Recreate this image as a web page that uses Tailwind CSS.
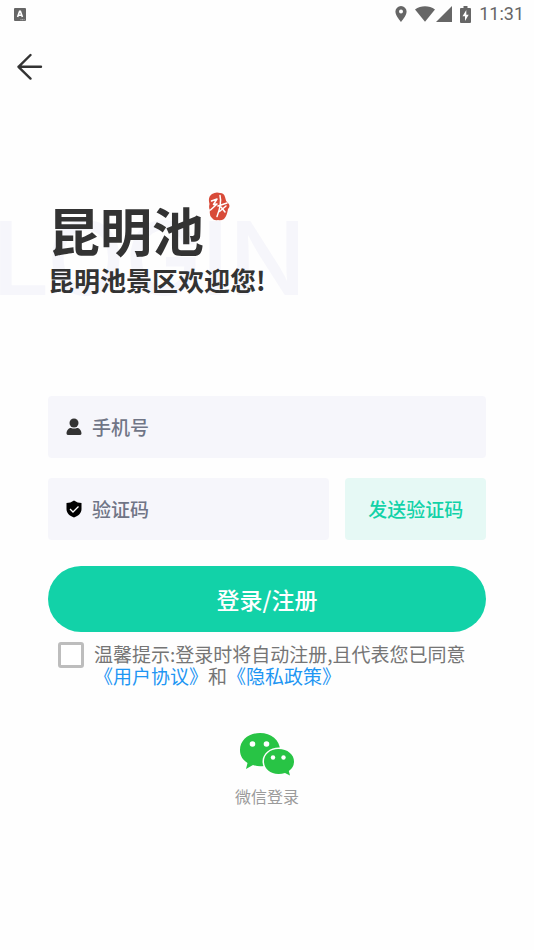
<!DOCTYPE html>
<html lang="zh-CN">
<head>
<meta charset="utf-8">
<meta name="viewport" content="width=device-width, initial-scale=1">
<title>登录</title>
<script src="https://cdn.jsdelivr.net/npm/@tailwindcss/browser@4"></script>
</head>
<body class="min-h-screen overflow-x-hidden bg-[#fefefe] font-['Noto_Sans_CJK_SC',sans-serif] text-[#333]">
<header>
  <div class="flex h-7 items-center justify-between pl-3.5 pr-2.5 text-[#666]">
    <svg class="h-[13px] w-3" viewBox="0 0 12 13" role="img" aria-label="输入法"><rect width="12" height="13" rx="1" fill="#666"/><path d="M3.6 9 5.600 3.200h.8L8.400 9M4.400 7.200h3.200" fill="none" stroke="#fff" stroke-width="1.600"/><path d="M6.500 11.700h4" stroke="#ddd" stroke-width=".8" stroke-dasharray="1 .6"/></svg>
    <div class="flex items-center">
      <svg class="mr-2 h-4 w-3" viewBox="0 0 12 16" fill="#666" aria-hidden="true"><path fill-rule="evenodd" d="M6 0a5.600 5.600 0 0 0-5.600 5.600C.4 9.800 6 16 6 16s5.600-6.200 5.600-10.400A5.600 5.600 0 0 0 6 0Zm0 3.600a2 2 0 1 1 0 4 2 2 0 0 1 0-4Z"/></svg>
      <svg class="mr-px h-4 w-5" viewBox="0 0 20 16" fill="#666" aria-hidden="true"><path d="M0 3.500C6-.8 14-.8 20 3.500L10 15.700Z"/></svg>
      <svg class="mr-2 h-4 w-4" viewBox="0 0 16 16" fill="#666" aria-hidden="true"><path d="M16 0v16H0Z"/></svg>
      <svg class="mr-2 h-[17px] w-[11px]" viewBox="0 0 11 17" aria-hidden="true"><path d="M3.500 0h4v2H10q1 0 1 1v13q0 1-1 1H1q-1 0-1-1V3q0-1 1-1h2.500Z" fill="#666"/><path d="M6.300 4 2.500 10.300h2.500V15l3.700-6.300H6.300Z" fill="#fff"/></svg>
      <time class="font-[Roboto,sans-serif] text-lg leading-7">11:31</time>
    </div>
  </div>
  <button type="button" aria-label="返回" class="ml-4 mt-6 block">
    <svg class="h-7 w-7" viewBox="0 0 28 28" fill="none" stroke="#333" stroke-width="2.400" stroke-linecap="round" stroke-linejoin="round" aria-hidden="true"><path d="M14.500 3 2.500 14.800l12 11.800M2.500 14.800H25"/></svg>
  </button>
</header>
<main class="px-12">
  <section class="relative mt-[110px] pb-[100px]">
    <div aria-hidden="true" class="absolute -left-14 top-2 font-[Inter,sans-serif] text-[102px] font-medium leading-[120px] text-[#f6f6fb]">LOGIN</div>
    <div class="relative flex h-[74px] items-start">
      <span class="mt-2 text-[52px] font-bold leading-[64px]">昆明池</span>
      <svg class="ml-1 mt-0.5 h-[29px] w-[22px]" viewBox="0 0 22 29" aria-hidden="true"><path d="M4 2Q8-.5 12 1q4 0 5 4 .5 4 3 6 3 3 0 6-1 7-4 10-3 2-6 1-4 1-6-2-3-2-2-8Q.5 16 1.500 12-.5 5 4 2Z" fill="#d84b39"/><g fill="none" stroke="#fff" stroke-width="1.500" stroke-linecap="round" stroke-linejoin="round"><path d="M3.500 9 9 7 5.500 12.500 9 12 2.500 18M12 3.500q2 8-3 21M10 14l9-3M13 15l4 5M11.500 19.500 18 14"/></g></svg>
    </div>
    <h1 class="relative text-[26px] font-bold leading-8">昆明池景区欢迎您!</h1>
  </section>
  <form>
    <label class="flex h-[62px] items-center rounded bg-[#f6f6fb] pl-[18px]">
      <svg class="h-[18px] w-4 shrink-0" viewBox="0 0 16 18" fill="#333" aria-hidden="true"><circle cx="8" cy="5" r="4.500"/><path d="M.5 15.500C.5 12 3 10 5 10q3 1.200 6 0c2 0 4.500 2 4.500 5.500q0 1.500-2 1.500h-11q-2 0-2-1.500Z"/></svg>
      <input type="tel" placeholder="手机号" aria-label="手机号" class="ml-2.5 w-full min-w-0 bg-transparent text-[19px] font-medium outline-none placeholder:text-[#707586]">
    </label>
    <div class="mt-5 grid grid-cols-[2fr_1fr] gap-4">
      <label class="flex h-[62px] min-w-0 items-center rounded bg-[#f6f6fb] pl-[18px]">
        <svg class="h-[18px] w-4 shrink-0" viewBox="0 0 16 18" aria-hidden="true"><path d="M8 .5q3.500 2.500 7.500 2.500v6c0 4-3 7-7.500 8.500C3.500 16 .5 13 .5 9V3Q4.500 3 8 .5Z" fill="#000"/><path d="m4 9 3 3 5.500-5.500" fill="none" stroke="#fff" stroke-width="1.300"/></svg>
        <input type="text" inputmode="numeric" placeholder="验证码" aria-label="验证码" class="ml-2.5 w-full min-w-0 bg-transparent text-[19px] font-medium outline-none placeholder:text-[#707586]">
      </label>
      <button type="button" class="whitespace-nowrap rounded bg-[#e6f9f5] text-[19px] font-medium text-[#12d2a8]">发送验证码</button>
    </div>
    <button type="submit" class="mt-[26px] h-[66px] w-full rounded-full bg-[#12d2a8] text-[23px] font-medium text-white">登录/注册</button>
    <div class="mt-2.5 flex pl-2.5">
      <input id="agree" type="checkbox" class="h-[26px] w-[26px] shrink-0 appearance-none rounded-[3px] border-3 border-[#bdbdbd] bg-white checked:bg-[#12d2a8]">
      <p class="ml-2.5 pt-px text-[19px] leading-[22px] text-[#757575]"><label for="agree" class="whitespace-nowrap">温馨提示:登录时将自动注册,且代表您已同意</label><br><a href="#terms" class="text-[#1e96f3]">《用户协议》</a>和<a href="#privacy" class="text-[#1e96f3]">《隐私政策》</a></p>
    </div>
  </form>
  <button type="button" class="mx-auto mt-[45px] flex flex-col items-center gap-2 text-base leading-6 text-[#9b9b9b]">
    <svg class="h-11 w-14" viewBox="0 0 56 44" aria-hidden="true"><path d="M21 1C10 1 1 8 1 18c0 6 3 10 7.500 13L7 37l7-4q4 1.500 9 1.200C38 34 41 27 41 18 41 8 32 1 21 1Z" fill="#28c445"/><path d="M40 15.500c-9 0-16.500 6-16.500 14s7 13.500 16.500 13.500q3 0 6-1l6 3-1.500-5q5.500-4 5.500-10.500c0-8-7-14-16-14Z" fill="#fefefe"/><path d="M39.500 17C31 17 25 22.500 25 29.500S31 42 39.500 42q3.500 0 6.500-1l5 2.500-1.200-4.500q5.200-3.500 5.200-9.500C55 22.500 48.500 17 39.500 17Z" fill="#28c445"/><g fill="#fff"><circle cx="13.500" cy="12" r="2.800"/><circle cx="27.500" cy="12" r="2.800"/><circle cx="34" cy="25.500" r="2.200"/><circle cx="44.500" cy="25.500" r="2.200"/></g></svg>
    微信登录
  </button>
</main>
</body>
</html>
